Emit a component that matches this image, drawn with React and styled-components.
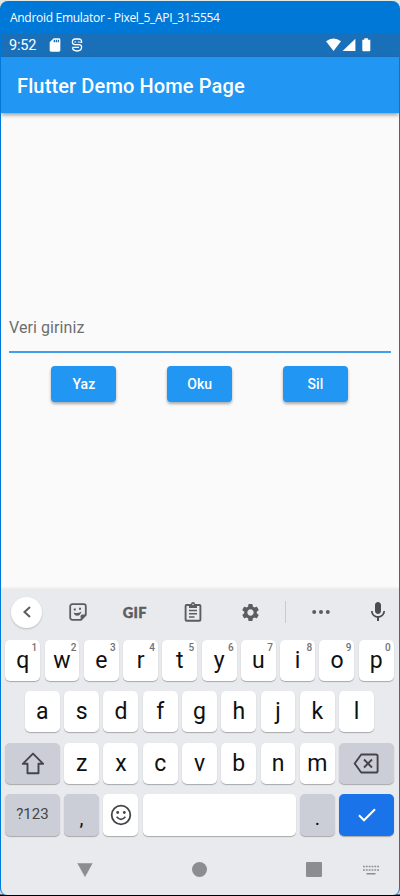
import React from "react";
import styled, { createGlobalStyle, css } from "styled-components";
import { MdSettings, MdMic, MdSdCard } from "react-icons/md";

const GlobalStyle = createGlobalStyle`
  * { box-sizing: border-box; }
  body { margin: 0; background: #e9ece6; }
  svg { display: block; flex: none; }
`;

const Backdrop = styled.div`
  width: 400px;
  height: 896px;
  padding-top: 1px;
  background: linear-gradient(#e4e8e2 0 50%, #c9d5df 50% 894px, #000 895px);
  font-family: Roboto, sans-serif;
  overflow: hidden;
`;

const Window = styled.div`
  display: flex;
  flex-direction: column;
  height: 894px;
  border: solid #0078d7;
  border-width: 0 1px;
  border-radius: 8px 8px 7px 7px;
  background: #0078d7;
  overflow: hidden;
`;

const TitleBar = styled.header`
  height: 32px;
  padding-left: 9px;
  font: 12px/34px "Open Sans", sans-serif;
  letter-spacing: -0.29px;
  color: #fff;
  white-space: nowrap;
`;

const StatusBar = styled.div`
  display: flex;
  align-items: center;
  height: 24px;
  padding: 0 28px 0 8px;
  background: #1a70b8;
  color: #fff;
`;

const Clock = styled.span`
  width: 38px;
  padding-top: 1px;
  font-size: 14.5px;
  line-height: 24px;
  letter-spacing: -0.2px;
`;

const StatusIcons = styled.div`
  display: flex;
  align-items: center;
  gap: ${(p) => p.$gap};
  margin-left: ${(p) => (p.$end ? "auto" : 0)};
`;

const AppBar = styled.div`
  position: relative;
  z-index: 1;
  flex: none;
  height: 56px;
  padding-left: 16px;
  background: #2196f3;
  box-shadow: 0 2px 4px rgba(0, 0, 0, 0.38);
  color: #fff;
  font-size: 20px;
  font-weight: 500;
  line-height: 58px;
  letter-spacing: 0.13px;
`;

const Body = styled.main`
  height: 476px;
  padding: 203px 8px 0;
  background: #fafafa;
`;

const Field = styled.div`
  height: 37px;
  border-bottom: 2px solid #409fed;
  color: #6e6e6e;
  font-size: 16px;
  line-height: 24px;
  letter-spacing: 0.08px;
`;

const Actions = styled.div`
  display: flex;
  justify-content: space-between;
  padding: 12.5px 43px 0 42.4px;
`;

const Action = styled.button`
  width: 65px;
  height: 36.5px;
  padding: 0;
  border: 0;
  border-radius: 4px;
  background: #2196f3;
  box-shadow: 0 2px 3px rgba(0, 0, 0, 0.32);
  color: #fff;
  font: 500 14px Roboto, sans-serif;
  letter-spacing: 0.1px;
`;

const Keyboard = styled.section`
  flex: 1;
  padding: 1px 4.9px 0 3.8px;
  background: #e8eaed;
  box-shadow: 0 -1px 2px rgba(0, 0, 0, 0.08);
`;

const Toolbar = styled.div`
  display: grid;
  grid-template-columns: 44px 58px 56px 61px 53px 18px 53px 61px;
  align-items: center;
  justify-items: center;
  height: 44px;
  color: #5c5d60;
`;

const Round = styled.div`
  display: grid;
  place-items: center;
  width: 31px;
  height: 31px;
  border-radius: 50%;
  background: #fff;
  box-shadow: 0 1px 2px rgba(0, 0, 0, 0.2);
`;

const Gif = styled.span`
  font: 900 14.5px "Lato", sans-serif;
  letter-spacing: 0.4px;
  -webkit-text-stroke: 0.4px currentColor;
`;

const Divider = styled.i`
  width: 1px;
  height: 22px;
  background: #c8cacd;
`;

const Keys = styled.div`
  display: flex;
  flex-direction: column;
  gap: 10px;
  padding-top: 6.4px;
`;

const KeyRow = styled.div`
  display: flex;
  justify-content: center;
  gap: 4.35px;
  height: 41.1px;
`;

const tones = {
  plain: css`background: #fff; color: #101010;`,
  muted: css`background: #cbced6; color: #444549;`,
  accent: css`background: #1a73e8; color: #fff;`,
};

const Key = styled.div`
  position: relative;
  display: flex;
  align-items: center;
  justify-content: center;
  width: ${(p) => p.$width || 34.95}px;
  height: ${(p) => p.$height || 41}px;
  padding-top: ${(p) => p.$drop || 0}px;
  border-radius: 5px;
  box-shadow: 0 1px 1px rgba(0, 0, 0, 0.28);
  font-size: ${(p) => p.$size || 23}px;
  line-height: 1;
  ${(p) => tones[p.$tone || "plain"]}
`;

const Mark = styled.span`
  color: #101010;
`;

const Hint = styled.sup`
  position: absolute;
  top: 2px;
  right: 3px;
  color: #707174;
  font-size: 10px;
  font-weight: 500;
  line-height: 12px;
`;

const NavRow = styled.nav`
  display: flex;
  align-items: center;
  justify-content: space-between;
  height: 50px;
  margin-top: 10px;
  padding: 0 15px 0 72px;
  color: #8c8d8f;
`;

const NavGroup = styled.div`
  display: flex;
  align-items: center;
  justify-content: space-between;
  width: 245.5px;
`;

const Icon = ({ w, h, children }) => (
  <svg width={w} height={h} viewBox={`0 0 ${w} ${h}`} fill="none" stroke="currentColor">
    {children}
  </svg>
);

const Emoji = () => (
  <Icon w={22} h={22}>
    <g stroke="#444549">
      <circle cx="11" cy="11" r="9.3" strokeWidth="1.8" />
      <circle cx="7.7" cy="8.5" r="1.4" fill="#444549" stroke="none" />
      <circle cx="14.3" cy="8.5" r="1.4" fill="#444549" stroke="none" />
      <path d="M6.6 12.7q4.4 5.2 8.8 0" strokeWidth="1.7" />
    </g>
  </Icon>
);

const Sticker = () => (
  <Icon w={18} h={18}>
    <path d="M12 16.8H3.2a2 2 0 0 1-2-2V3.2a2 2 0 0 1 2-2h11.6a2 2 0 0 1 2 2V12z" strokeWidth="1.8" />
    <path d="M11.6 17v-3.7q0-1.7 1.7-1.7H17z" fill="currentColor" stroke="none" />
    <path d="M4.8 6.5h2M10 5.7h2" strokeWidth="2" />
    <path d="M4.5 9.5q4.2 1.5 8-1-1.2 4.2-4.4 4.2-2.5 0-3.6-3.2z" fill="currentColor" stroke="none" />
  </Icon>
);

const Clipboard = () => (
  <Icon w={18} h={20}>
    <rect x="1.6" y="3" width="14.8" height="15.8" rx="1" strokeWidth="1.9" />
    <path d="M5 2h2a2 2 0 0 1 4 0h2v4H5z" fill="currentColor" stroke="none" />
    <circle cx="9" cy="2.5" r=".7" fill="#fff" stroke="none" />
    <path d="M5 8.5h8M5 11.7h8M5 14.9h5.5" strokeWidth="1.5" />
  </Icon>
);

const Microphone = styled(MdMic)`
  color: #4c4d50;
`;

const TOP = "qwertyuiop".split("");
const MIDDLE = "asdfghjkl".split("");
const BOTTOM = "zxcvbnm".split("");

export default function App() {
  return (
    <Backdrop>
      <GlobalStyle />
      <Window>
        <TitleBar>Android Emulator - Pixel_5_API_31:5554</TitleBar>
        <StatusBar>
          <Clock>9:52</Clock>
          <StatusIcons $gap="8px">
            <MdSdCard size={16} />
            <Icon w={12} h={14}>
              <path d="M10.6 5V3.8Q10.6 1 7.8 1H4.2Q1.4 1 1.4 3.8v.5q0 2.4 2.6 2.4h4q2.6 0 2.6 2.4 0 3.9-4.6 3.9-4 0-4.6-3.3" strokeWidth="1.3" />
              <path d="M1.4 9.4H8M3.4 4h1.8M6.8 4h1.8M10.6 4.3H8.8" strokeWidth="1.1" />
            </Icon>
          </StatusIcons>
          <StatusIcons $end $gap="0">
            <Icon w={45} h={14}>
              <g fill="currentColor" stroke="none">
                <path d="M0 3.3Q7.5-2.4 15 3.3L7.5 13z" />
                <path d="M29.4.8v12.3H16.6z" />
                <path d="M36.3 1.7h2V.3h3.6v1.4h2.4v10.5q0 1-1 1h-6q-1 0-1-1z" />
              </g>
            </Icon>
          </StatusIcons>
        </StatusBar>
        <AppBar>Flutter Demo Home Page</AppBar>
        <Body>
          <Field>Veri giriniz</Field>
          <Actions>
            <Action>Yaz</Action>
            <Action>Oku</Action>
            <Action>Sil</Action>
          </Actions>
        </Body>
        <Keyboard>
          <Toolbar>
            <Round>
              <Icon w={10} h={14}><path d="M8 2 2.5 7 8 12" strokeWidth="2" /></Icon>
            </Round>
            <Sticker />
            <Gif>GIF</Gif>
            <Clipboard />
            <MdSettings size={21} />
            <Divider />
            <Icon w={18} h={4}>
              <g fill="currentColor" stroke="none">
                <circle cx="2.2" cy="2" r="2" /><circle cx="9" cy="2" r="2" /><circle cx="15.8" cy="2" r="2" />
              </g>
            </Icon>
            <Microphone size={24} />
          </Toolbar>
          <Keys>
            <KeyRow>
              {TOP.map((c, i) => <Key key={c}>{c}<Hint>{(i + 1) % 10}</Hint></Key>)}
            </KeyRow>
            <KeyRow>
              {MIDDLE.map((c) => <Key key={c}>{c}</Key>)}
            </KeyRow>
            <KeyRow>
              <Key $width={54.6} $tone="muted">
                <Icon w={24} h={23}><path d="M12 1.6 1.8 11.8h4.7v9.4h11v-9.4h4.7z" strokeWidth="1.9" strokeLinejoin="round" /></Icon>
              </Key>
              {BOTTOM.map((c) => <Key key={c}>{c}</Key>)}
              <Key $width={54.6} $tone="muted">
                <Icon w={26} h={21}>
                  <path d="M8.2 1.5H23q1.6 0 1.6 1.6v14.8q0 1.6-1.6 1.6H8.2L1.7 10.5z" strokeWidth="1.9" strokeLinejoin="round" />
                  <path d="m11 6.5 8 8m0-8-8 8" strokeWidth="1.9" />
                </Icon>
              </Key>
            </KeyRow>
            <KeyRow>
              <Key $width={54.6} $height={42} $tone="muted" $size={15}>?123</Key>
              <Key $height={42} $tone="muted" $size={20} $drop={7}><Mark>,</Mark></Key>
              <Key $height={42}><Emoji /></Key>
              <Key $height={42} $width={153} />
              <Key $height={42} $tone="muted" $size={20} $drop={7}><Mark>.</Mark></Key>
              <Key $height={42} $width={54.6} $tone="accent">
                <Icon w={18} h={14}><path d="m1 7.3 5 5L17 1.2" strokeWidth="2" /></Icon>
              </Key>
            </KeyRow>
          </Keys>
          <NavRow>
            <NavGroup>
              <Icon w={16} h={14}><path d="M.8.4h14.4L8 13.6z" fill="currentColor" strokeWidth=".6" strokeLinejoin="round" /></Icon>
              <Icon w={15} h={15}><circle cx="7.5" cy="7.5" r="7.5" fill="currentColor" stroke="none" /></Icon>
              <Icon w={16} h={15}><rect width="16" height="15" rx="1" fill="currentColor" stroke="none" /></Icon>
            </NavGroup>
            <Icon w={16} h={10}>
              <path d="M0 1.5h16M0 5h16" strokeWidth="1.7" strokeDasharray="1.8 1.04" />
              <path d="M3.5 8.7h9" strokeWidth="1.4" />
            </Icon>
          </NavRow>
        </Keyboard>
      </Window>
    </Backdrop>
  );
}
